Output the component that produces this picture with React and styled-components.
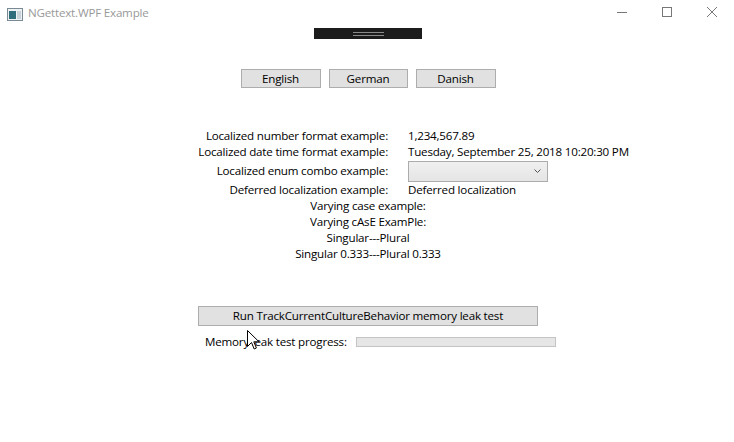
import React from 'react'
import styled, { createGlobalStyle } from 'styled-components'

const GlobalStyle = createGlobalStyle`
  html, body {
    margin: 0;
    padding: 0;
    background: #ffffff;
  }
  body {
    font-family: 'Open Sans', 'Noto Sans', sans-serif;
    font-size: 11.6px;
    letter-spacing: -0.2px;
    color: #000;
  }
`

const Window = styled.div`
  width: 734px;
  height: 442px;
  position: relative;
  overflow: hidden;
  background: #fff;
`

const TitleBar = styled.div`
  height: 28px;
  display: flex;
  align-items: center;
`

const AppIcon = styled.svg`
  margin-left: 7px;
  margin-right: 5px;
  flex-shrink: 0;
`

const Title = styled.div`
  color: #999999;
  flex: 1;
  padding-bottom: 3px;
`

const Controls = styled.div`
  display: flex;
  height: 28px;
`

const ControlButton = styled.div`
  width: 45px;
  height: 28px;
  display: flex;
  align-items: center;
  justify-content: center;
  padding-bottom: 4px;
  box-sizing: border-box;
`

const Content = styled.div`
  display: flex;
  flex-direction: column;
  align-items: center;
  padding-left: 2px;
`

const DebugBar = styled.div`
  width: 108px;
  height: 11px;
  background: #1c1c1c;
  display: flex;
  flex-direction: column;
  align-items: center;
  justify-content: center;
  gap: 2px;
`

const Grip = styled.div`
  width: 31px;
  height: 1px;
  background: #8a8a8a;
`

const LanguageRow = styled.div`
  display: flex;
  gap: 8px;
  margin-top: 30px;
`

const Button = styled.button`
  font-family: inherit;
  font-size: inherit;
  letter-spacing: inherit;
  color: #000;
  width: ${p => p.$width || 80}px;
  height: ${p => p.$height || 19}px;
  background: #e1e1e1;
  border: 1px solid #adadad;
  padding: 0;
  line-height: 1;
  margin: 0;
`

const FormGrid = styled.div`
  align-self: flex-start;
  margin-left: 178px;
  margin-top: 40px;
  display: grid;
  grid-template-columns: 208px auto;
  column-gap: 20px;
  line-height: 16px;
`

const Label = styled.div`
  display: flex;
  align-items: center;
  justify-content: flex-end;
  white-space: nowrap;
  height: ${p => p.$tall ? 22 : 16}px;
`

const Value = styled.div`
  display: flex;
  align-items: center;
  height: ${p => p.$tall ? 22 : 16}px;
  white-space: nowrap;
`

const Combo = styled.div`
  width: 140px;
  height: 21px;
  box-sizing: border-box;
  border: 1px solid #acacac;
  background: linear-gradient(#f0f0f0, #e5e5e5);
  display: flex;
  align-items: center;
  justify-content: flex-end;
  padding-right: 6px;
`

const CenterLine = styled.div`
  line-height: 16px;
  text-align: center;
  white-space: nowrap;
`

const RunButton = styled(Button)`
  margin-top: 44px;
`

const ProgressRow = styled.div`
  align-self: flex-start;
  margin-left: 203px;
  display: flex;
  align-items: center;
  gap: 9px;
  margin-top: 8px;
  line-height: 16px;
  white-space: nowrap;
`

const ProgressTrack = styled.div`
  width: 200px;
  height: 10px;
  box-sizing: border-box;
  background: #e6e6e6;
  border: 1px solid #c4c4c4;
`

const Cursor = styled.svg`
  position: absolute;
  left: 247px;
  top: 330px;
`

export default function App() {
  return (
    <Window>
      <GlobalStyle />
      <TitleBar>
        <AppIcon width="16" height="13" viewBox="0 0 16 13">
          <rect x="0.5" y="0.5" width="15" height="12" fill="#eef2f4" stroke="#7a8a94" />
          <rect x="2" y="3" width="7" height="8" fill="#2f6c7c" />
          <rect x="10" y="3" width="4" height="8" fill="#c8d2d8" />
        </AppIcon>
        <Title>NGettext.WPF Example</Title>
        <Controls>
          <ControlButton>
            <svg width="10" height="10" viewBox="0 0 10 10">
              <line x1="0" y1="5.5" x2="10" y2="5.5" stroke="#777" strokeWidth="1" />
            </svg>
          </ControlButton>
          <ControlButton>
            <svg width="10" height="10" viewBox="0 0 10 10">
              <rect x="0.5" y="0.5" width="9" height="9" fill="none" stroke="#777" strokeWidth="1" />
            </svg>
          </ControlButton>
          <ControlButton>
            <svg width="10" height="10" viewBox="0 0 10 10">
              <path d="M0 0 L10 10 M10 0 L0 10" stroke="#777" strokeWidth="1" />
            </svg>
          </ControlButton>
        </Controls>
      </TitleBar>

      <Content>
        <DebugBar>
          <Grip />
          <Grip />
        </DebugBar>

        <LanguageRow>
          <Button>English</Button>
          <Button $width={79}>German</Button>
          <Button>Danish</Button>
        </LanguageRow>

        <FormGrid>
          <Label>Localized number format example:</Label>
          <Value>1,234,567.89</Value>
          <Label>Localized date time format example:</Label>
          <Value>Tuesday, September 25, 2018 10:20:30 PM</Value>
          <Label $tall>Localized enum combo example:</Label>
          <Value $tall>
            <Combo>
              <svg width="7" height="4" viewBox="0 0 7 4">
                <path d="M0.5 0.5 L3.5 3.5 L6.5 0.5" fill="none" stroke="#555" strokeWidth="1" />
              </svg>
            </Combo>
          </Value>
          <Label>Deferred localization example:</Label>
          <Value>Deferred localization</Value>
        </FormGrid>

        <CenterLine>Varying case example:</CenterLine>
        <CenterLine>Varying cAsE ExamPle:</CenterLine>
        <CenterLine>Singular---Plural</CenterLine>
        <CenterLine>Singular 0.333---Plural 0.333</CenterLine>

        <RunButton $width={340} $height={20}>
          Run TrackCurrentCultureBehavior memory leak test
        </RunButton>

        <ProgressRow>
          <span>Memory leak test progress:</span>
          <ProgressTrack />
        </ProgressRow>
      </Content>

      <Cursor width="13" height="21" viewBox="0 0 13 21">
        <path
          d="M0.5 0.5 L0.5 16.5 L4.5 12.5 L7.2 19 L9.4 18 L6.8 11.8 L12 11.8 Z"
          fill="#fff"
          stroke="#000"
          strokeWidth="1"
          strokeLinejoin="miter"
        />
      </Cursor>
    </Window>
  )
}
